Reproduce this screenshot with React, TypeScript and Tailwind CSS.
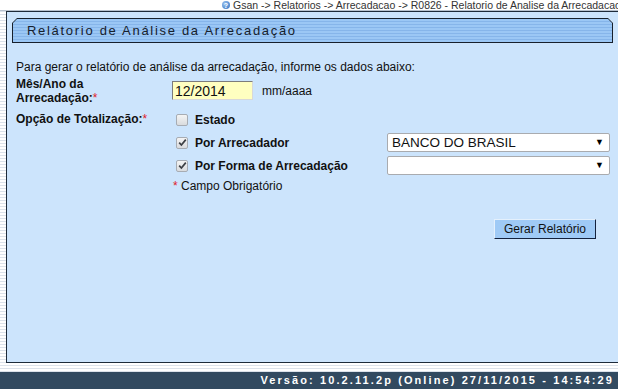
import React from "react";

function Check({ checked }: { checked?: boolean }) {
  return (
    <span className="relative inline-flex h-[12px] w-[12px] shrink-0 items-center justify-center rounded-[2px] border border-[#a7acb3] bg-[linear-gradient(180deg,#f4f4f4,#d9dbde)]">
      {checked && (
        <svg width="9" height="9" viewBox="0 0 9 9">
          <path d="M1.2 4.6 L3.4 7 L7.8 1.6" fill="none" stroke="#3c3f44" strokeWidth="1.7" />
        </svg>
      )}
    </span>
  );
}

function Select({ value }: { value: string }) {
  return (
    <div className="flex h-[19px] w-[223px] items-center justify-between rounded-[2px] border border-[#a9abaf] bg-white pl-[4px] pr-[5px] text-[13.5px] leading-none text-[#111]">
      <span>{value}</span>
      <span className="text-[9px] text-black">▼</span>
    </div>
  );
}

export default function App() {
  return (
    <div className="flex h-[389px] w-[618px] flex-col overflow-hidden bg-[repeating-linear-gradient(180deg,#ffffff_0px,#ffffff_2px,#dce2ea_2px,#dce2ea_3px)] font-['Liberation_Sans',Arial,sans-serif]">
      {/* breadcrumb */}
      <div className="flex h-[11px] shrink-0 items-center border-b border-[#b8c2ce] bg-white pl-[222px] text-[10.5px] leading-none text-[#333] whitespace-nowrap">
        <span className="mr-[3px] inline-flex h-[8px] w-[8px] shrink-0 items-center justify-center rounded-full bg-[radial-gradient(circle_at_35%_35%,#9cc4f0,#2f6fc0)] text-[7px] font-bold leading-none text-white">
          ?
        </span>
        <span>Gsan -&gt; Relatorios -&gt; Arrecadacao -&gt; R0826 - Relatorio de Analise da Arrecadacao</span>
      </div>

      {/* panel */}
      <div className="ml-[6px] h-[352px] w-[620px] shrink-0 border border-[#1e2b3a] bg-[#cce4fc]">
        {/* title */}
        <div className="ml-[5px] mt-[6px] h-[25px] w-[601px] bg-[#17202c] p-[1px] [clip-path:polygon(5px_0,calc(100%_-_5px)_0,100%_5px,100%_100%,0_100%,0_5px)]">
          <div className="flex h-full w-full items-center bg-[repeating-linear-gradient(180deg,#9bc7f5_0px,#9bc7f5_2px,#86b5ea_2px,#86b5ea_3px)] pl-[14px] text-[13px] leading-none tracking-[1.7px] text-[#16202c] [clip-path:polygon(4px_0,calc(100%_-_4px)_0,100%_4px,100%_100%,0_100%,0_4px)]">
            Relátorio de Análise da Arrecadação
          </div>
        </div>

        <div className="pl-[9px] pr-[4px] text-[12px] leading-[14px] text-[#111]">
          <div className="mt-[17px]">Para gerar o relatório de análise da arrecadação, informe os dados abaixo:</div>

          {/* Mês/Ano */}
          <div className="mt-[3px] flex">
            <div className="w-[156px] font-bold">
              Mês/Ano da
              <br />
              Arrecadação:<span className="font-normal text-[#e0202a]">*</span>
            </div>
            <div className="mt-[4px] flex items-start">
              <div className="flex h-[19px] w-[81px] items-center border border-t-[#7c7c7c] border-l-[#7c7c7c] border-r-[#d8d8d8] border-b-[#d8d8d8] bg-[#ffffc0] pl-[2px] text-[14px] leading-none text-[#111]">
                12/2014
              </div>
              <span className="ml-[9px] mt-[3px]">mm/aaaa</span>
            </div>
          </div>

          {/* Opção */}
          <div className="mt-[3px] flex">
            <div className="w-[160px] pt-[4px] font-bold">
              Opção de Totalização:<span className="font-normal text-[#e0202a]">*</span>
            </div>
            <div className="flex flex-col">
              <div className="flex h-[23px] items-center">
                <Check />
                <span className="ml-[7px] font-bold">Estado</span>
              </div>
              <div className="flex h-[23px] items-center">
                <Check checked />
                <span className="ml-[7px] w-[192px] font-bold">Por Arrecadador</span>
                <Select value="BANCO DO BRASIL" />
              </div>
              <div className="flex h-[23px] items-center">
                <Check checked />
                <span className="ml-[7px] w-[192px] font-bold">Por Forma de Arrecadação</span>
                <Select value="" />
              </div>
              <div className="-ml-[3px] mt-[2px]">
                <span className="text-[#e0202a]">*</span> Campo Obrigatório
              </div>
            </div>
          </div>

          <div className="mt-[26px] flex pl-[478px]">
            <button className="h-[20px] w-[102px] border border-t-[#e4f0fc] border-l-[#e4f0fc] border-r-[#13213d] border-b-[#13213d] bg-[#9fcaf6] text-[12px] leading-none text-[#111]">
              Gerar Relatório
            </button>
          </div>
        </div>
      </div>

      <div className="h-[9px] shrink-0" />

      {/* footer */}
      <div className="flex h-[17px] shrink-0 items-center justify-end bg-[#324a60] pr-[4px] text-[11px] font-bold leading-none tracking-[2.1px] text-white">
        Versão: 10.2.11.2p (Online) 27/11/2015 - 14:54:29
      </div>
    </div>
  );
}
